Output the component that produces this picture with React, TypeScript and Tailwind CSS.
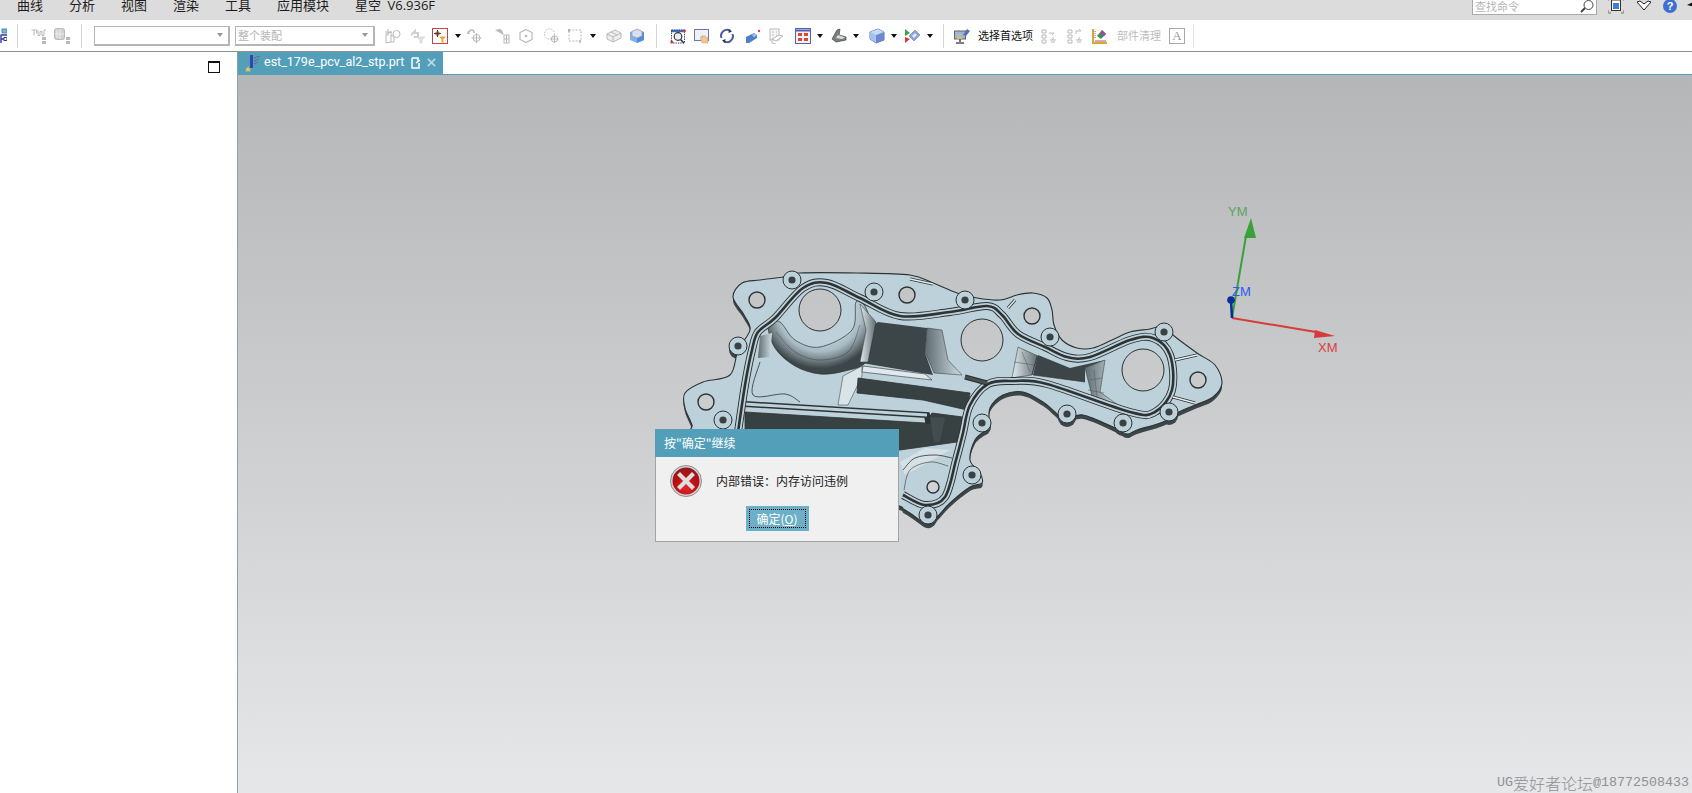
import React from "react";

type P = number[];
function smooth(p: P[], closed = true): string {
  const n = p.length;
  const g = (i: number) => (closed ? p[(i + n) % n] : p[Math.max(0, Math.min(n - 1, i))]);
  let d = `M${p[0][0]} ${p[0][1]}`;
  const end = closed ? n : n - 1;
  for (let i = 0; i < end; i++) {
    const a = g(i - 1), b = g(i), c = g(i + 1), e = g(i + 2);
    const c1 = [b[0] + (c[0] - a[0]) / 6, b[1] + (c[1] - a[1]) / 6];
    const c2 = [c[0] - (e[0] - b[0]) / 6, c[1] - (e[1] - b[1]) / 6];
    d += `C${c1[0].toFixed(1)} ${c1[1].toFixed(1)} ${c2[0].toFixed(1)} ${c2[1].toFixed(1)} ${c[0]} ${c[1]}`;
  }
  return d + (closed ? "Z" : "");
}
const poly = (p: P[]) => "M" + p.map((q) => q.join(" ")).join("L") + "Z";

const outline: P[] = [[733,297],[742,283],[760,280],[783,277],[800,273],[857,273],[910,275],[933,283],[957,293],[977,298],[1000,300],[1017,295],[1033,293],[1047,298],[1052,310],[1054,325],[1062,340],[1077,348],[1093,348],[1112,340],[1130,332],[1150,329],[1165,326],[1173,335],[1197,353],[1215,365],[1222,383],[1213,397],[1195,405],[1177,413],[1163,422],[1137,430],[1127,434],[1115,428],[1083,415],[1065,420],[1055,412],[1043,402],[1023,392],[1003,395],[990,408],[988,427],[975,440],[970,460],[980,473],[982,483],[970,487],[950,503],[937,517],[927,524],[905,510],[880,500],[700,450],[692,425],[685,408],[685,393],[703,382],[730,375],[738,350],[750,330],[744,315]];
const gasket: P[] = [[738,432],[745,385],[752,350],[758,332],[775,318],[803,288],[827,283],[860,298],[900,316],[950,312],[987,306],[1002,315],[1018,334],[1045,347],[1067,357],[1090,357],[1130,340],[1153,338],[1170,355],[1172,390],[1155,412],[1130,412],[1047,384],[1013,381],[988,384],[970,405],[963,433],[956,460],[945,497],[925,505],[903,495]];
const bosses: P[] = [[792,280],[874,292],[965,300],[738,346],[723,420],[982,423],[972,475],[928,515],[1050,337],[1164,332],[1169,412],[1123,423],[1067,414]];
const bigHoles: P[] = [[820,310],[982,340],[1143,370]];
const smallHoles: P[] = [[757,300,8],[907,295,8],[706,402,8],[1032,316,8],[1198,380,8],[933,487,6]];

const DK = "#3c4547";
const LT = "#bdd1da";
const LN = "#2d3233";

function Part() {
  const body = smooth(outline);
  return (
    <g>
      <path d={body} fill={DK} transform="translate(0 4)" />
      {bosses.map(([x, y]) => <circle key={`s${x}`} cx={x} cy={y + 4} r={9} fill={DK} />)}
      <path d={body} fill={LT} stroke={LN} strokeWidth={1.1} />
      <path d={poly([[862,363],[933,375],[925,353],[927,328],[878,322],[866,330]])} fill={DK} />
      <path d={smooth([[768,324],[775,348],[795,366],[820,374],[845,371],[866,362],[872,335],[866,308],[856,302],[852,330],[820,347],[795,340],[780,322]])} fill="url(#arc)" stroke={LN} strokeWidth={0.7} />
      <path d={smooth([[776,332],[795,352],[820,360],[848,352],[860,325]], false)} fill="none" stroke={LN} strokeWidth={0.4} />
      <path d={poly([[860,304],[876,322],[868,362],[860,362],[866,330]])} fill="url(#wall)" stroke={LN} strokeWidth={0.5} />
      <path d={poly([[927,328],[942,330],[948,360],[962,375],[934,373],[925,352]])} fill="url(#wall2)" stroke={LN} strokeWidth={0.5} />
      <path d={poly([[760,336],[772,333],[770,357],[758,358]])} fill="url(#wall2)" />
      <path d={smooth([[760,362],[753,395],[785,394],[800,402]], false)} fill="none" stroke={LN} strokeWidth={0.8} />
      <path d={poly([[843,376],[862,366],[862,376],[848,405],[838,405]])} fill="#d9e4e9" stroke={LN} strokeWidth={0.5} />
      <path d={poly([[858,378],[970,393],[967,410],[923,400],[857,393]])} fill="#384142" stroke={LN} strokeWidth={0.8} />
      <path d={poly([[863,366],[925,374],[932,380],[862,372]])} fill="#dfe8ec" stroke={LN} strokeWidth={0.6} />
      <path d={poly([[745,412],[925,423],[932,413],[963,417],[957,442],[900,450],[745,440]])} fill="#384142" stroke={LN} strokeWidth={0.8} />
      <path d="M745 404L927 415L928 421" fill="none" stroke={LN} strokeWidth={6} strokeLinecap="round" />
      <path d="M745 404L927 415" fill="none" stroke={LT} strokeWidth={3} />
      <path d={poly([[930,417],[945,418],[940,442],[934,442]])} fill="#434d4f" />
      <path d={poly([[1038,355],[1070,368],[1105,360],[1085,368],[1085,382],[1033,375]])} fill={DK} />
      <path d={poly([[1018,347],[1038,356],[1032,375],[1012,378]])} fill="url(#wall)" stroke={LN} strokeWidth={0.5} />
      <path d={poly([[1085,368],[1105,360],[1100,392],[1118,405],[1093,400]])} fill="url(#wall2)" stroke={LN} strokeWidth={0.5} />
      <path d="M1022 352L1030 372M1014 362L1034 365M1090 380L1102 378M1094 370L1097 398M1088 390L1104 393" stroke="#4a565a" strokeWidth={0.5} />
      <path d="M1037 356L1032 375" stroke={LN} strokeWidth={0.8} />
      <path d="M1033 375L1085 382" stroke={LN} strokeWidth={0.6} />
      <path d="M900 462L925 448L950 450L905 475Z" fill="#d6e1e6" />
      <path d={smooth([[903,470],[915,458],[935,455],[952,458]], false)} fill="none" stroke={LN} strokeWidth={0.8} />
      <path d={smooth([[904,490],[910,470],[930,462],[948,466]], false)} fill="none" stroke={LN} strokeWidth={0.6} />
      <path d={smooth(gasket, false)} fill="none" stroke={LN} strokeWidth={8} strokeLinejoin="round" />
      <path d={smooth(gasket, false)} fill="none" stroke={LT} strokeWidth={6.2} strokeLinejoin="round" />
      <path d={smooth(gasket, false)} fill="none" stroke={LN} strokeWidth={2.6} strokeLinejoin="round" />
      <path d="M965 377L987 383" stroke={LN} strokeWidth={5} />
      <path d="M965 377L987 383" stroke="#45504f" strokeWidth={3} />
      <path d="M1175 360L1197 355M1173 397L1195 403M1008 308L1015 300M910 279L933 284" stroke={LN} strokeWidth={3} />
      <path d="M1175 360L1197 355M1173 397L1195 403M1008 308L1015 300M910 279L933 284" stroke="#e6eef1" strokeWidth={1.4} />
      {bigHoles.map(([x, y]) => <circle key={`h${x}`} cx={x} cy={y} r={21} fill="url(#bg)" stroke={LN} strokeWidth={1} />)}
      {smallHoles.map(([x, y, r]) => <circle key={`n${x}`} cx={x} cy={y} r={r} fill="url(#bg)" stroke={LN} strokeWidth={1.4} />)}
      {bosses.map(([x, y]) => (
        <g key={`b${x}`}>
          <circle cx={x} cy={y} r={9} fill={LT} stroke={LN} strokeWidth={1} />
          <circle cx={x} cy={y} r={3.6} fill="#3a4142" />
        </g>
      ))}
    </g>
  );
}

function Triad() {
  return (
    <g fontFamily="'Liberation Sans',sans-serif" fontSize={13}>
      <path d="M1232 318L1246 236" stroke="#38a238" strokeWidth={2} />
      <path d="M1251 218L1256 238L1244 238Z" fill="#38a238" />
      <path d="M1232 318L1316 332" stroke="#d93a3a" strokeWidth={2} />
      <path d="M1335 336L1314 338L1315 330Z" fill="#d93a3a" />
      <path d="M1232 318L1231 300" stroke="#0a2d9c" strokeWidth={2.6} />
      <circle cx={1231} cy={300} r={3.8} fill="#0a2d9c" />
      <text x={1228} y={216} fill="#5fa35f">YM</text>
      <text x={1232} y={296} fill="#2a5cf0">ZM</text>
      <text x={1318} y={352} fill="#d84040">XM</text>
    </g>
  );
}

function I({ className = "", children }: { className?: string; children: React.ReactNode }) {
  return (
    <svg viewBox="0 0 16 16" className={`w-4 h-4 shrink-0 ${className}`} fill="none">
      {children}
    </svg>
  );
}
function Sep({ className = "" }: { className?: string }) {
  return <div className={`w-px h-6 bg-[#d4d4d4] shrink-0 ${className}`} />;
}
function Arrow({ className = "" }: { className?: string }) {
  return (
    <svg viewBox="0 0 6 4" className={`w-[6px] h-1 shrink-0 ${className}`}>
      <path d="M0 0H6L3 4Z" fill="#111" />
    </svg>
  );
}
const G = "#b9b9b9";
const D = "#d0d0d0";

function Toolbar() {
  return (
    <div className="h-[31px] bg-white border-b-[1.5px] border-[#8e9396] flex items-center shrink-0 text-[11px] box-content overflow-hidden">
      <I className="-ml-[9px]">
        <rect x="11" y="1" width="5" height="4" fill="#7db6d8" stroke="#2d7da8" strokeWidth="0.8" />
        <path d="M9.500 7H16M10 7V15M10 11H14" stroke="#33389c" strokeWidth="1.4" />
        <rect x="13" y="9.500" width="3" height="3" fill="#fff" stroke="#33389c" />
      </I>
      <Sep className="ml-[10px]" />
      <I className="ml-[13px]">
        <path d="M0.500 2H3V7.500M3 2H5.500V5.500M7 2V7.500H9V3.500H11V7.500H13V2H15" stroke={G} strokeWidth="1" />
        <rect x="11" y="9" width="4" height="3" fill={G} /><rect x="11" y="13" width="4" height="3" fill={G} />
      </I>
      <I className="ml-[7px]">
        <rect x="0.500" y="0.500" width="10" height="11" rx="2" fill={D} stroke={G} />
        <path d="M3 2V10M6 1V11M1 6H10" stroke="#eee" />
        <rect x="12" y="9" width="4" height="3" fill={G} /><rect x="12" y="13" width="4" height="3" fill={G} />
      </I>
      <Sep className="ml-[11px]" />
      <div className="ml-3 w-[136px] h-5 border-2 border-[#b5b5b5] border-t-[1px] border-l-[1px] shrink-0 flex items-center justify-end pr-1">
        <svg viewBox="0 0 6 4" className="w-2 h-1"><path d="M0 0H6L3 4Z" fill="#999" /></svg>
      </div>
      <div className="ml-[5px] w-[140px] h-5 border-2 border-[#b5b5b5] border-t-[1px] border-l-[1px] shrink-0 flex items-center justify-between pl-[2px] pr-1 text-[#b4b4b4]">
        <span>整个装配</span>
        <svg viewBox="0 0 6 4" className="w-2 h-1"><path d="M0 0H6L3 4Z" fill="#999" /></svg>
      </div>
      <I className="ml-[10px]">
        <path d="M1 6L6 4V14L1 15ZM6 7L9 9V14L6 14" stroke={G} strokeWidth="1" />
        <circle cx="11.500" cy="6" r="3.500" stroke={G} /><path d="M3 1V8M0 4H7" stroke={G} />
      </I>
      <I className="ml-[9px]">
        <path d="M1 7L5 3V5H8V9H4" stroke={D} strokeWidth="2" />
        <path d="M7 9H15L12 12V15H10V12Z" fill="#e2e2e2" stroke={D} strokeWidth="0.6" />
      </I>
      <div className="ml-[6px] w-4 h-4 border-[1.5px] border-[#c8404a] shrink-0 flex items-center justify-center">
        <svg viewBox="0 0 14 14" className="w-[14px] h-[14px]">
          <path d="M4.500 1V8M1 4.500H8" stroke="#444" />
          <circle cx="4.500" cy="4.500" r="1.800" stroke="#a03030" fill="none" />
          <path d="M6 7.500H13L10.500 10V13.500H8.500V10Z" fill="#e8a92c" />
        </svg>
      </div>
      <Arrow className="ml-[7px]" />
      <I className="ml-[6px]">
        <path d="M2 4C3 1 7 1 7 5" stroke={G} strokeWidth="1.5" /><path d="M1 2L3 6H0Z" fill={G} />
        <circle cx="9.500" cy="10" r="3.500" stroke={G} /><path d="M9.500 5V15M4.500 10H14.500" stroke={G} />
      </I>
      <I className="ml-[11px]">
        <path d="M1 2L6 1L9 3L6 5Z" fill={G} /><path d="M5 2L9 6" stroke={G} strokeWidth="2" />
        <rect x="10" y="7" width="5" height="8" stroke={G} /><path d="M12.500 7V15M10 11H15" stroke={G} />
      </I>
      <I className="ml-[8px]">
        <path d="M8 1.500L14 4.500V11.500L8 14.500L2 11.500V4.500Z" stroke={G} strokeWidth="1.2" />
        <circle cx="8" cy="8" r="1.300" fill={G} />
      </I>
      <I className="ml-[9px]">
        <circle cx="6.500" cy="6" r="5" stroke={G} strokeDasharray="1.5 1.2" />
        <circle cx="11.500" cy="11" r="3.200" stroke={G} /><path d="M11.500 7V15M7.500 11H15.500" stroke={G} />
      </I>
      <I className="ml-2">
        <rect x="2" y="2" width="12" height="11" stroke={G} strokeDasharray="2 1.3" />
        <path d="M2 1V4M1 2H3M13 12V15" stroke="#999" />
      </I>
      <Arrow className="ml-[7px]" />
      <I className="ml-[10px]">
        <path d="M1 6L9 2L15 5V10L7 14L1 11Z" fill="#eee" stroke={G} />
        <path d="M1 6L7 9V14M7 9L15 5M5 4L11 7" stroke={G} />
      </I>
      <I className="ml-[7px]">
        <path d="M1 4L8 1L15 4V12L8 15L1 12Z" fill="#7fb2e8" />
        <path d="M8 8V15L15 12V4Z" fill="#4f8fd8" />
        <path d="M3 3.500L8 1L13 3.500L13 8L8 10L3 8Z" fill="#cfe3f6" stroke="#d77c8f" strokeWidth="0.7" />
      </I>
      <Sep className="ml-[11px]" />
      <I className="ml-[13px]">
        <path d="M1 3H15" stroke="#3f6fb5" strokeWidth="2.4" />
        <rect x="1.500" y="2" width="13" height="13" stroke="#2d3a9a" strokeDasharray="1.4 1" />
        <circle cx="8" cy="8.500" r="3.800" stroke="#333" strokeWidth="1.2" fill="#e8f0f5" />
        <path d="M10.500 11.500L14 15" stroke="#333" strokeWidth="1.6" />
        <circle cx="1.800" cy="14" r="1.500" fill="#d33" /><circle cx="14.500" cy="3" r="1.400" fill="#d33" />
      </I>
      <I className="ml-2">
        <rect x="0.500" y="1.500" width="14" height="11" fill="#eef2f6" stroke="#6b78ac" />
        <path d="M8 15C7 12 6 10 7 8L8.500 10V7L10 9L11 7.500L12 9.500L13.500 9.500L14 15Z" fill="#f0c896" stroke="#c99a66" strokeWidth="0.5" />
      </I>
      <I className="ml-[9px]">
        <path d="M2.500 10A6 6 0 0 1 11 2.600" stroke="#4a5aa8" strokeWidth="2" />
        <path d="M13.500 6A6 6 0 0 1 5 13.400" stroke="#4a5aa8" strokeWidth="2" />
        <path d="M10 1L13 3.500L9.500 5ZM6 15L3 12.500L6.500 11Z" fill="#333" />
      </I>
      <I className="ml-[10px]">
        <path d="M1 9L9 5L12 7V10L4 15H1Z" fill="#4f7fc6" /><path d="M9 5L12 7L9 9.500L7 7Z" fill="#9cc0ee" />
        <circle cx="14" cy="3" r="1.200" fill="#d44" />
      </I>
      <I className="ml-[7px]">
        <rect x="2" y="1" width="9" height="11" fill="#f6f6f6" stroke={G} />
        <path d="M4 4H6M4 7H6M8 4H9M8 7H9" stroke={G} />
        <path d="M4 11L8 13L15 8L11 7ZM4 11V15L8 16" stroke={G} fill="#fff" />
      </I>
      <I className="ml-[11px]">
        <rect x="0.500" y="0.500" width="15" height="15" fill="#eef2fa" stroke="#5561ae" />
        <path d="M1 2.500H15" stroke="#5561ae" strokeWidth="2" />
        <path d="M3 5H7V8H3ZM9 5H13V8H9ZM3 10H7V13H3ZM9 10H13V13H9Z" fill="#e2452f" />
      </I>
      <Arrow className="ml-[6px]" />
      <I className="ml-2">
        <path d="M1 11L6 2L9 1L8 7L15 9V12L5 14Z" fill="#7c7f7f" stroke="#444" strokeWidth="0.7" />
        <path d="M7 7L14 9.500L11 11L5 10Z" fill="#ddd" />
      </I>
      <Arrow className="ml-[6px]" />
      <I className="ml-[10px]">
        <path d="M1 4L9 1L15 4V12L7 15L1 11Z" fill="#8fa8e0" stroke="#5d70b8" />
        <path d="M1 4L7 7V15L1 11Z" fill="#a8c0ee" /><path d="M7 7L15 4V12L7 15Z" fill="#6c88cf" />
        <path d="M1 4L9 1L15 4L7 7Z" fill="#c9daf6" />
      </I>
      <Arrow className="ml-[6px]" />
      <I className="ml-[7px]">
        <path d="M1 1L6 5L1 8Z" fill="#37a548" />
        <path d="M1 9L6 11L1 15Z" fill="#d9343a" />
        <path d="M5 8L11 2L16 7L10 13Z" fill="#8aa3d8" stroke="#6a7fb8" strokeWidth="0.6" />
        <path d="M8 8L11 5L13 7L10 10Z" fill="#e5ecf8" />
      </I>
      <Arrow className="ml-[7px]" />
      <Sep className="ml-[10px]" />
      <I className="ml-[10px]">
        <rect x="0.500" y="3" width="11" height="8" fill="#93b8dc" stroke="#666" />
        <path d="M9 7L13 1L16 3L12 8Z" fill="#5b6ea8" />
        <path d="M5 6C8 6 9 8 8 11L3 11C3 8 3 7 5 6Z" fill="#d8b48c" />
        <path d="M6 11V14M2 15H10" stroke="#555" strokeWidth="1.5" />
      </I>
      <span className="ml-2 w-[55px] shrink-0 text-[#111] whitespace-nowrap">选择首选项</span>
      <I className="ml-2">
        <path d="M1 2H5V5H1ZM1 7H5V10H1ZM1 12H5V15H1ZM8 5H13L11 7M12 9V12M9 12H15M10 14H14" stroke={G} strokeWidth="1" />
      </I>
      <I className="ml-[10px]">
        <path d="M1 2H5V5H1ZM1 7H5V10H1ZM1 12H5V15H1ZM9 6V3H14M12 1L14 3M12 9V12M9 12H15M10 14H14" stroke={G} strokeWidth="1" />
      </I>
      <I className="ml-[9px]">
        <path d="M1 1V15H15" stroke="#d0a83c" strokeWidth="2.2" />
        <path d="M3 13H14" stroke="#c04a4a" />
        <path d="M5 8L10 2L14 6L9 11Z" fill="#3f8f5a" /><path d="M8 5L10 2L14 6L12 8Z" fill="#a04aa8" />
        <path d="M3 3V11" stroke="#c04a4a" strokeDasharray="1 1" />
      </I>
      <span className="ml-[9px] w-[44px] shrink-0 text-[#bdbdbd] whitespace-nowrap">部件清理</span>
      <div className="ml-2 w-4 h-4 border border-[#a8a8a8] shrink-0 flex items-center justify-center text-[#9a9a9a] text-[13px] leading-none [font-family:'Liberation_Serif',serif]">A</div>
      <Sep className="ml-2 bg-[#e4e4e4]" />
    </div>
  );
}

function MenuBar() {
  const items = ["曲线", "分析", "视图", "渲染", "工具", "应用模块", "星空 V6.936F"];
  return (
    <div className="h-5 bg-[#dcdcdc] flex items-start pl-1 text-[13px] leading-[13px] text-[#1c1c1c] shrink-0 overflow-hidden [word-spacing:3px] [font-family:'Open_Sans','Noto_Sans_CJK_SC',sans-serif]">
      {items.map((t) => (
        <span key={t} className="px-[13px] -mt-[1px] whitespace-nowrap">{t}</span>
      ))}
      <div className="ml-auto -mr-[3px] flex items-start shrink-0 [font-family:'Noto_Sans_CJK_SC',sans-serif]">
        <div className="w-[125px] h-[15px] bg-white border border-t-0 border-[#aaaaaa] flex items-center justify-between pl-[2px] pr-[2px] text-[11px] text-[#b5b5b5]">
          <span className="-mt-[2px]">查找命令</span>
          <svg viewBox="0 0 14 14" className="w-[14px] h-[14px]" fill="none">
            <circle cx="8.500" cy="5" r="4.500" stroke="#444" /><path d="M5 8L1 12" stroke="#444" strokeWidth="2" />
          </svg>
        </div>
        <svg viewBox="0 0 16 14" className="ml-[11px] w-4 h-[14px]" fill="none">
          <path d="M0 10V13H3M16 10V13H13M0 0V1M16 0V1" stroke="#777" />
          <rect x="3.500" y="0" width="9" height="10.500" fill="#fff" stroke="#333" />
          <rect x="5" y="3" width="6" height="6" fill="#3f7fd0" />
        </svg>
        <svg viewBox="0 0 16 12" className="ml-[12px] w-4 h-3" fill="none">
          <path d="M1 2L8 10L15 2L12 1L8 4L4 1Z" fill="#fff" stroke="#222" strokeLinejoin="round" />
        </svg>
        <div className="ml-[11px] w-[14px] h-[14px] rounded-full bg-[#3e6fd0] text-white text-[11px] font-bold leading-[14px] text-center [font-family:'Liberation_Sans',sans-serif] -mt-[1px]">?</div>
        <svg viewBox="0 0 8 8" className="ml-[10px] w-2 h-2 shrink-0 mt-px"><path d="M0 4L8 0V6Z" fill="#111" /></svg>
      </div>
    </div>
  );
}

function ErrorIcon() {
  return (
    <svg viewBox="0 0 32 32" className="w-8 h-8 shrink-0">
      <defs>
        <radialGradient id="red" cx="0.5" cy="0.75" r="0.75">
          <stop offset="0" stopColor="#e0262a" />
          <stop offset="0.6" stopColor="#b90e12" />
          <stop offset="1" stopColor="#8e1b1e" />
        </radialGradient>
      </defs>
      <circle cx="16" cy="16" r="15.500" fill="#d4d4d4" stroke="#8f8f8f" />
      <circle cx="16" cy="16" r="13.500" fill="url(#red)" />
      <path d="M10 10L22 22M22 10L10 22" stroke="#dedede" strokeWidth="4.2" strokeLinecap="square" />
    </svg>
  );
}

export default function App() {
  return (
    <div className="w-screen h-screen overflow-hidden flex flex-col bg-white [font-family:'Noto_Sans_CJK_SC',sans-serif]">
      <MenuBar />
      <Toolbar />
      <div className="flex-1 flex min-h-0">
        <aside className="w-[238px] shrink-0 bg-white border-r border-[#8fa0a8] flex justify-end pt-[9px] pr-[17px]">
          <div className="w-3 h-3 border border-[#111] border-t-2" />
        </aside>
        <div className="flex-1 flex flex-col min-w-0">
          <div className="h-[21.5px] shrink-0 flex bg-white">
            <div className="w-[205px] bg-[#539fba] flex items-center text-white text-[12.500px] pl-[7px] [font-family:'Roboto',sans-serif]">
              <svg viewBox="0 0 16 18" className="w-4 h-[18px] shrink-0">
                <path d="M5 1H8V14H5Z" fill="#3b3fb8" />
                <path d="M9 4L15 2M9 7L14 5M9 10L13 8" stroke="#5a7280" strokeWidth="1" />
                <path d="M3 12L4 14.500L6.500 14.500L4.500 16L5.500 18L3 17L0.500 18L1.500 16L0 14.500L2 14.500Z" fill="#e8c84a" />
              </svg>
              <span className="ml-[3px] w-[140px] whitespace-nowrap">est_179e_pcv_al2_stp.prt</span>
              <svg viewBox="0 0 10 12" className="ml-[7px] w-[10px] h-3 shrink-0" fill="none">
                <path d="M1 1H7V4M1 1V11H8V6" stroke="#fff" strokeWidth="1.5" /><path d="M5 6L9 3" stroke="#fff" strokeWidth="1.5" />
              </svg>
              <svg viewBox="0 0 10 10" className="ml-[6px] w-[9px] h-[9px] shrink-0"><path d="M1 1L9 9M9 1L1 9" stroke="#b9d6e1" strokeWidth="2" /></svg>
            </div>
          </div>
          <div className="h-[1.5px] shrink-0 bg-[#539fba]" />
          <main className="relative flex-1 bg-gradient-to-b from-[#b5b6b8] to-[#e6e7e9] overflow-hidden">
            <svg className="absolute inset-0 w-[1454px] h-[718px]" viewBox="238 75 1454 718">
              <defs>
                <linearGradient id="bg" gradientUnits="userSpaceOnUse" x1="0" y1="75" x2="0" y2="793">
                  <stop offset="0" stopColor="#b5b6b8" />
                  <stop offset="1" stopColor="#e6e7e9" />
                </linearGradient>
                <radialGradient id="arc" gradientUnits="userSpaceOnUse" cx="820" cy="308" r="66">
                  <stop offset="0.5" stopColor={LT} />
                  <stop offset="0.66" stopColor="#a9bac2" />
                  <stop offset="0.8" stopColor="#707d83" />
                  <stop offset="0.92" stopColor="#3c4547" />
                  <stop offset="1" stopColor="#3c4547" />
                </radialGradient>
                <linearGradient id="wall" x1="0" y1="0" x2="1" y2="0">
                  <stop offset="0" stopColor="#e2ebef" />
                  <stop offset="1" stopColor="#5e6b70" />
                </linearGradient>
                <linearGradient id="wall2" x1="0" y1="0" x2="1" y2="0">
                  <stop offset="0" stopColor="#5e6b70" />
                  <stop offset="1" stopColor="#cfdce2" />
                </linearGradient>
              </defs>
              <Part />
              <Triad />
            </svg>
            <div className="absolute left-[417px] top-[354px] w-[244px] h-[113px] bg-[#f0f0f0] border border-t-0 border-[#a3a3a3] flex flex-col text-[12px]">
              <div className="h-7 -mx-px bg-[#539fba] text-white flex items-center pl-[9px] shrink-0">按"确定"继续</div>
              <div className="flex items-center pl-[14px] mt-[8px] h-8 shrink-0 text-[#222]">
                <ErrorIcon />
                <span className="ml-[14px] whitespace-nowrap">内部错误：内存访问违例</span>
              </div>
              <div className="flex justify-center mt-[9px]">
                <div className="w-[63px] h-[25px] bg-[#6cafc6] p-[3px]">
                  <div className="w-full h-full border border-dotted border-black flex items-center justify-center text-white text-[12px] leading-none">
                    确定(<span className="underline">O</span>)
                  </div>
                </div>
              </div>
            </div>
            <div className="absolute right-[3px] bottom-[2px] flex items-center text-[#8f9194] whitespace-nowrap leading-4">
              <span className="text-[13.330px] [font-family:'Liberation_Mono',monospace]">UG</span>
              <span className="text-[16px] font-light [font-family:'Noto_Sans_CJK_SC',serif]">爱好者论坛</span>
              <span className="text-[13.330px] [font-family:'Liberation_Mono',monospace]">@18772508433</span>
            </div>
          </main>
        </div>
      </div>
    </div>
  );
}
